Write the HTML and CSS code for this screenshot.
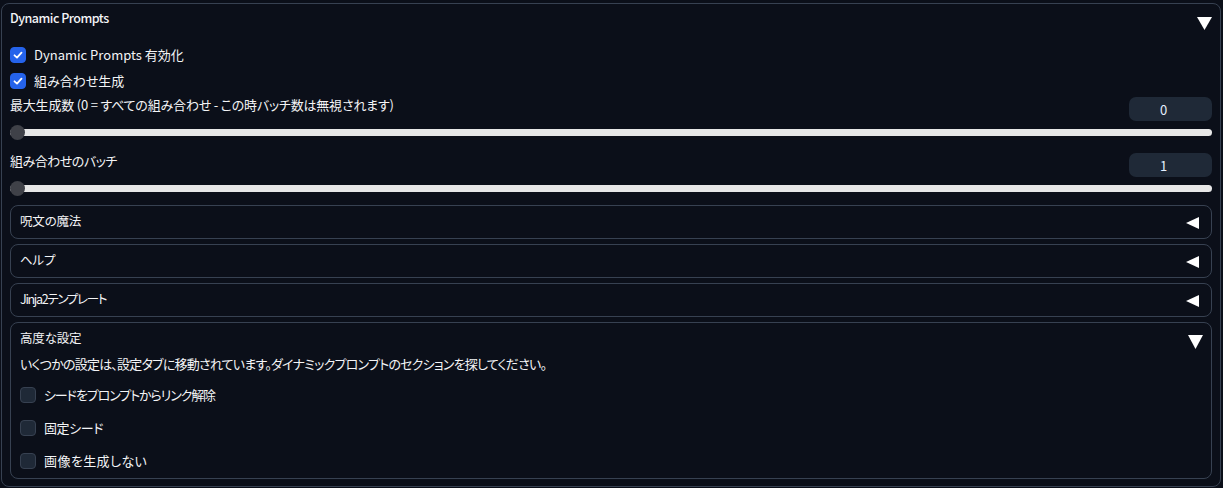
FILE: index.html
```html
<!DOCTYPE html>
<html lang="ja">
<head>
<meta charset="utf-8">
<link rel="stylesheet" href="styles.css">
</head>
<body>
<div class="page">
  <div class="panel">
    <div class="panel-head">
      <span class="panel-title">Dynamic Prompts</span>
      <svg class="arrow arrow-main" width="15" height="13" viewBox="0 0 15 13"><polygon points="0,0 15,0 7.5,13" fill="#fff"/></svg>
    </div>
    <div class="panel-body">
      <div class="checks">
        <label class="check">
          <span class="box on"><svg width="16" height="16" viewBox="0 0 16 16"><path d="M4.5 8.3 L7 10.6 L11.5 5.6" fill="none" stroke="#fff" stroke-width="1.8" stroke-linecap="round" stroke-linejoin="round"/></svg></span>
          <span class="check-label">Dynamic Prompts 有効化</span>
        </label>
        <label class="check">
          <span class="box on"><svg width="16" height="16" viewBox="0 0 16 16"><path d="M4.5 8.3 L7 10.6 L11.5 5.6" fill="none" stroke="#fff" stroke-width="1.8" stroke-linecap="round" stroke-linejoin="round"/></svg></span>
          <span class="check-label">組み合わせ生成</span>
        </label>
      </div>
      <div class="slider-block first">
        <div class="slider-head">
          <span class="slider-label long">最大生成数 (0 = すべての組み合わせ - この時バッチ数は無視されます)</span>
          <input class="num" type="text" value="0">
        </div>
        <input class="range" type="range" min="0" max="1000" value="0">
      </div>
      <div class="slider-block second">
        <div class="slider-head">
          <span class="slider-label batch">組み合わせのバッチ</span>
          <input class="num" type="text" value="1">
        </div>
        <input class="range" type="range" min="1" max="10" value="1">
      </div>
      <div class="accordions">
        <div class="acc">
          <div class="acc-head">
            <span class="acc-title">呪文の魔法</span>
            <svg class="arrow arrow-left" width="13" height="12" viewBox="0 0 13 12"><polygon points="13,0 13,12 0,6" fill="#fff"/></svg>
          </div>
        </div>
        <div class="acc">
          <div class="acc-head">
            <span class="acc-title">ヘルプ</span>
            <svg class="arrow arrow-left" width="13" height="12" viewBox="0 0 13 12"><polygon points="13,0 13,12 0,6" fill="#fff"/></svg>
          </div>
        </div>
        <div class="acc">
          <div class="acc-head">
            <span class="acc-title jinja">Jinja2テンプレート</span>
            <svg class="arrow arrow-left" width="13" height="12" viewBox="0 0 13 12"><polygon points="13,0 13,12 0,6" fill="#fff"/></svg>
          </div>
        </div>
        <div class="acc open">
          <div class="acc-head">
            <span class="acc-title">高度な設定</span>
            <svg class="arrow arrow-down" width="15" height="14" viewBox="0 0 15 14"><polygon points="0,0 15,0 7.5,14" fill="#fff"/></svg>
          </div>
          <p class="acc-desc">いくつかの設定は、設定タブに移動されています。ダイナミックプロンプトのセクションを探してください。</p>
          <div class="acc-checks">
            <label class="check"><span class="box"></span><span class="check-label seed">シードをプロンプトからリンク解除</span></label>
            <label class="check"><span class="box"></span><span class="check-label fixed">固定シード</span></label>
            <label class="check"><span class="box"></span><span class="check-label noimg">画像を生成しない</span></label>
          </div>
        </div>
      </div>
    </div>
  </div>
</div>
</body>
</html>
```

FILE: styles.css
```css
html, body {
  margin: 0;
  padding: 0;
  background: #0b0f19;
}
body {
  color: #f3f4f6;
  font-family: "Noto Sans CJK JP", "Noto Sans", sans-serif;
  font-feature-settings: "palt";
  font-size: 13px;
  line-height: 20px;
}
.page {
  padding: 3px 2px 0 1px;
}
.panel {
  border: 1px solid #374151;
  border-radius: 8px;
  padding: 4px 8px 7px 8px;
}
.panel-head {
  display: flex;
  justify-content: space-between;
  align-items: flex-start;
  height: 20px;
}
.panel-title {
  font-size: 12.5px;
  font-weight: 500;
  letter-spacing: -0.5px;
}
.arrow { display: block; flex: none; }
.arrow-main { margin-top: 9px; }
.panel-body {
  margin-top: 17px;
}
.checks {
  display: flex;
  flex-direction: column;
  gap: 6px;
}
.check {
  display: flex;
  align-items: center;
  gap: 8px;
  height: 20px;
}
.box {
  width: 16px;
  height: 16px;
  box-sizing: border-box;
  border-radius: 4px;
  background: #1f2937;
  border: 1px solid #374151;
  flex: none;
  display: flex;
}
.box.on {
  background: #2563eb;
  border-color: #2563eb;
}
.box.on svg { margin: -1px; }
.check-label.seed { letter-spacing: -1.1px; }
.check-label.fixed { letter-spacing: -0.4px; }
.check-label.noimg { letter-spacing: 0.4px; }
.slider-block {
  display: flex;
  flex-direction: column;
  gap: 4px;
}
.slider-block.first { margin-top: 4px; }
.slider-block.second { margin-top: 12px; }
.slider-label.long { letter-spacing: -0.2px; }
.slider-label.batch { letter-spacing: -0.5px; }
.slider-head {
  display: flex;
  justify-content: space-between;
  align-items: flex-start;
  height: 26px;
}
.num {
  margin-top: 2px;
  width: 83px;
  height: 24px;
  box-sizing: border-box;
  border: none;
  border-radius: 7px;
  background: #1f2937;
  color: #e5f0ff;
  text-align: center;
  font-family: "Noto Sans CJK JP", "Noto Sans", sans-serif;
  font-size: 13px;
  padding: 0 14px 0 0;
  outline: none;
}
.range {
  -webkit-appearance: none;
  appearance: none;
  width: 100%;
  height: 14px;
  margin: 0;
  background: transparent;
  display: block;
}
.range::-webkit-slider-runnable-track {
  height: 7px;
  background: #e7e7e7;
  border-radius: 4px;
}
.range::-webkit-slider-thumb {
  -webkit-appearance: none;
  width: 15px;
  height: 15px;
  border-radius: 50%;
  background: #3f4148;
  margin-top: -4px;
  border: none;
}
.accordions {
  margin-top: 10px;
  display: flex;
  flex-direction: column;
  gap: 5px;
}
.acc {
  border: 1px solid #374151;
  border-radius: 8px;
  padding: 5px 12px 7px 9px;
}
.acc.open {
  padding: 5px 8px 7px 9px;
}
.acc-head {
  display: flex;
  justify-content: space-between;
  align-items: flex-start;
  height: 20px;
}
.acc-title {
  font-size: 12.5px;
  letter-spacing: -0.2px;
}
.acc-title.jinja { letter-spacing: -1.3px; }
.arrow-left { margin-top: 6px; }
.arrow-down { margin-top: 7px; }
.acc-desc {
  margin: 6px 0 0 0;
  letter-spacing: -0.77px;
}
.acc-checks {
  margin-top: 11px;
  display: flex;
  flex-direction: column;
  gap: 13px;
}
```
